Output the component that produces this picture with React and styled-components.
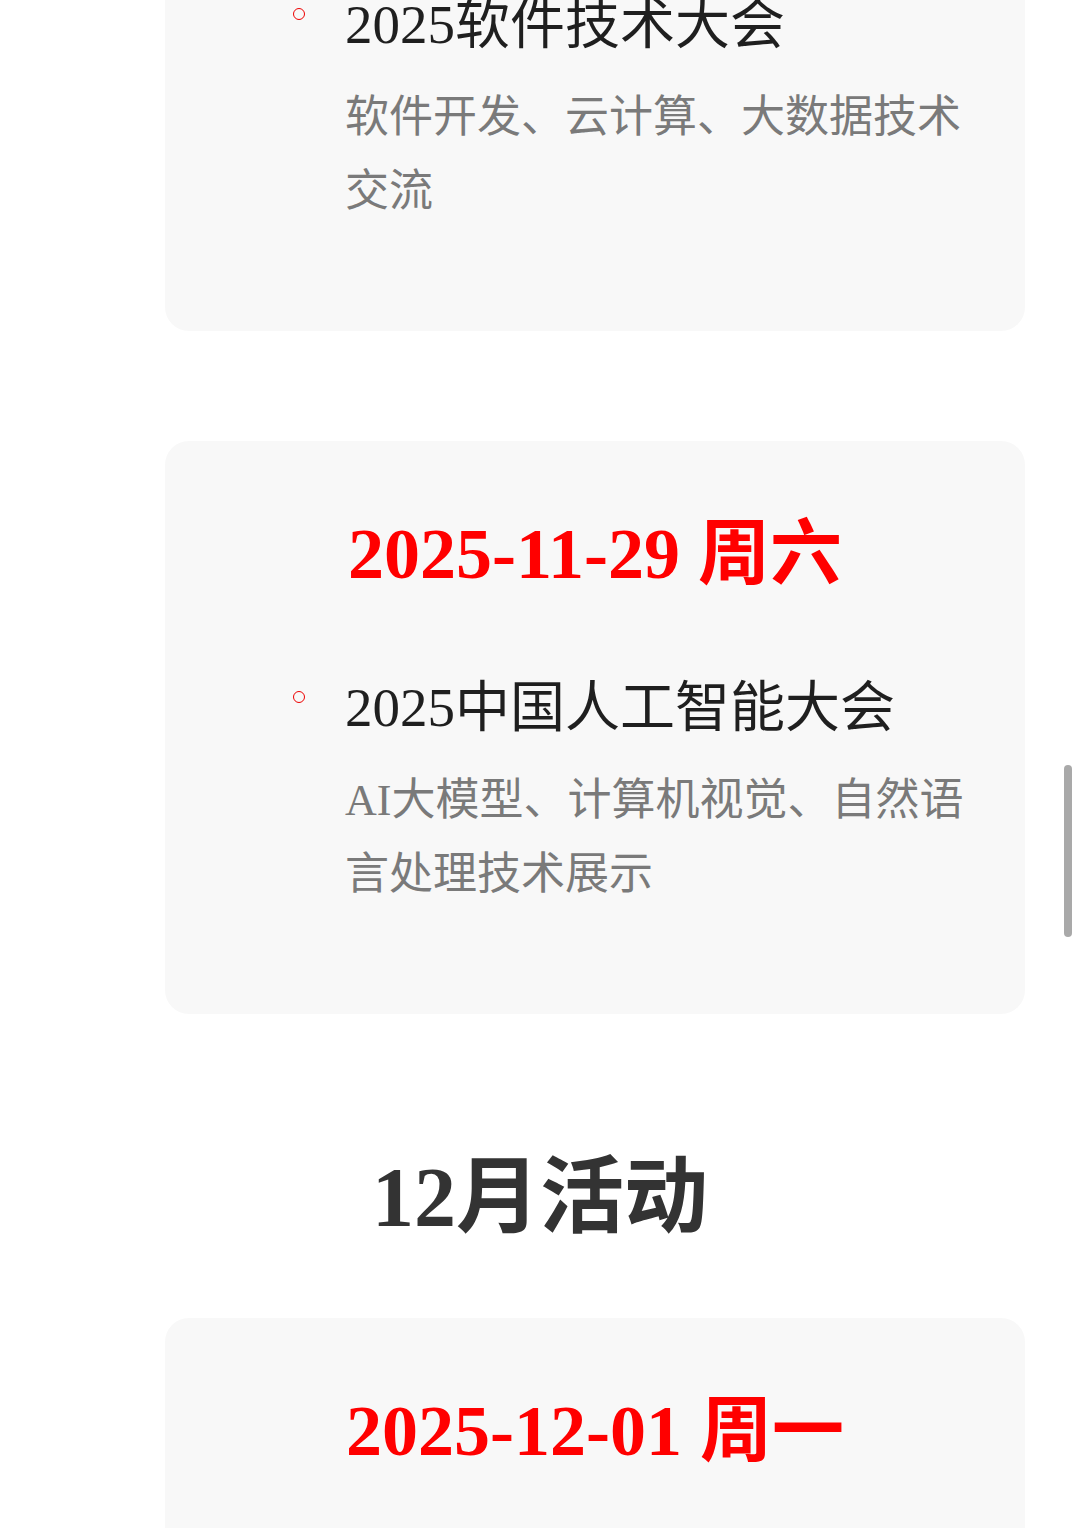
import React from "react"
import styled, { createGlobalStyle } from "styled-components"

const GlobalStyle = createGlobalStyle`
  html, body {
    margin: 0;
    padding: 0;
    height: 100%;
    overflow: hidden;
    background: #fff;
  }
  body {
    font-family: "Liberation Serif", "Noto Sans CJK SC", serif;
  }
`

const events = [
  {
    continued: true,
    items: [
      {
        title: "2025软件技术大会",
        desc: "软件开发、云计算、大数据技术交流",
      },
    ],
  },
  {
    date: "2025-11-29 周六",
    items: [
      {
        title: "2025中国人工智能大会",
        desc: "AI大模型、计算机视觉、自然语言处理技术展示",
      },
    ],
  },
]

const december = [{ date: "2025-12-01 周一", items: [] }]

const Page = styled.main`
  display: flex;
  flex-direction: column;
  margin-top: -100px;
`

const Card = styled.section`
  margin: 0 55px 0 165px;
  padding: ${({ $continued }) => ($continued ? "86px" : "63px")} 50px 102px;
  background: #f8f8f8;
  border-radius: 24px;
  & + & {
    margin-top: 110px;
  }
`

const DateTitle = styled.h2`
  margin: 0 0 64px;
  text-align: center;
  font-size: 72px;
  line-height: 1.4;
  font-weight: 700;
  color: #f00;
`

const ItemList = styled.ul`
  margin: 0;
  padding: 0 0 0 130px;
  list-style: none;
`

const Item = styled.li`
  position: relative;
  &::before {
    content: "";
    position: absolute;
    left: -52px;
    top: 22px;
    width: 10px;
    height: 10px;
    border: 1.5px solid #e00;
    border-radius: 50%;
  }
`

const ItemTitle = styled.h3`
  margin: 0 0 18px;
  font-size: 55px;
  line-height: 1.4;
  font-weight: 400;
  color: #1f1f1f;
`

const ItemDesc = styled.p`
  margin: 0;
  font-size: 44px;
  line-height: 74px;
  color: #7a7a7a;
`

const MonthHeading = styled.h1`
  margin: 125px 0 62px;
  text-align: center;
  font-size: 84px;
  line-height: 1.4;
  font-weight: 700;
  color: #333;
`

const ScrollThumb = styled.div`
  position: fixed;
  top: 765px;
  right: 8px;
  width: 8px;
  height: 172px;
  border-radius: 4px;
  background: #a9a9a9;
`

const DayCard = ({ date, items, continued }) => (
  <Card $continued={continued}>
    {date && <DateTitle>{date}</DateTitle>}
    {items.length > 0 && (
      <ItemList>
        {items.map((item) => (
          <Item key={item.title}>
            <ItemTitle>{item.title}</ItemTitle>
            <ItemDesc>{item.desc}</ItemDesc>
          </Item>
        ))}
      </ItemList>
    )}
  </Card>
)

export default function App() {
  return (
    <>
      <GlobalStyle />
      <Page>
        {events.map((day, i) => (
          <DayCard key={i} {...day} />
        ))}
        <MonthHeading>12月活动</MonthHeading>
        {december.map((day, i) => (
          <DayCard key={i} {...day} />
        ))}
      </Page>
      <ScrollThumb />
    </>
  )
}
